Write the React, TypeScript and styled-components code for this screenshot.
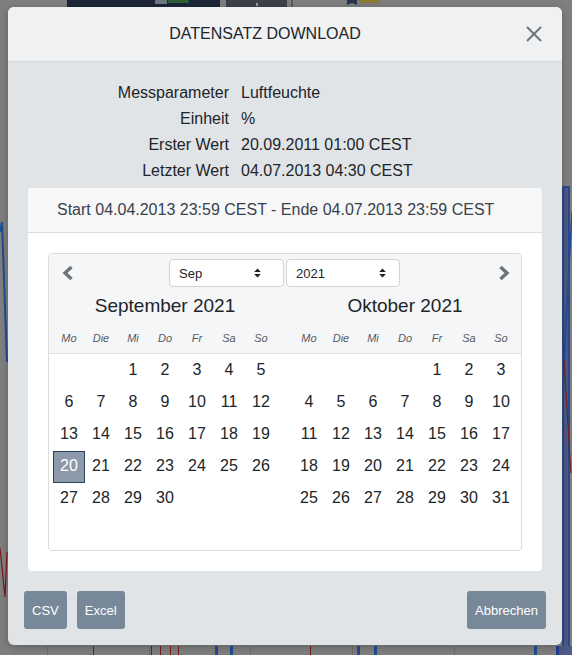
import React from "react";
import styled, { createGlobalStyle } from "styled-components";

const GlobalStyle = createGlobalStyle`
  html, body { margin: 0; padding: 0; }
  body {
    font-family: "Liberation Sans", Arial, sans-serif;
    background: #7f7f7f;
    color: #212529;
  }
  * { box-sizing: border-box; }
`;

const Backdrop = styled.div`
  position: relative;
  width: 572px;
  height: 655px;
  overflow: hidden;
  background: #7f7f7f;
  padding: 7px 0 0 8px;
`;

const BackdropArt = styled.svg`
  position: absolute;
  left: 0;
  top: 0;
  width: 572px;
  height: 655px;
`;

const Modal = styled.div`
  position: relative;
  width: 554px;
  background: #e0e4e7;
  border-radius: 6px;
  overflow: hidden;
  box-shadow: 0 2px 8px rgba(0, 0, 0, 0.25);
`;

const Header = styled.div`
  height: 55px;
  display: flex;
  align-items: center;
  padding: 0 16px;
  background: #eff1f3;
  border-bottom: 1px solid #d3d8dc;
`;

const Title = styled.h5`
  flex: 1;
  margin: 0;
  text-align: center;
  font-size: 16px;
  font-weight: 400;
  color: #212529;
`;

const CloseButton = styled.button`
  width: 40px;
  height: 30px;
  border: 0;
  background: none;
  padding: 0 4px 0 0;
  display: flex;
  align-items: center;
  justify-content: flex-end;
  cursor: pointer;
`;

const Body = styled.div`
  padding: 18px 20px 0;
`;

const InfoGrid = styled.div`
  display: grid;
  grid-template-columns: 201px 1fr;
  column-gap: 12px;
  font-size: 16px;
  line-height: 26px;
`;

const InfoLabel = styled.div`
  text-align: right;
`;

const InfoValue = styled.div``;

const Card = styled.div`
  margin-top: 4px;
  background: #ffffff;
  border-radius: 4px;
  overflow: hidden;
`;

const CardHeader = styled.div`
  height: 45px;
  display: flex;
  align-items: center;
  padding: 0 29px;
  background: #f7f7f7;
  border-bottom: 1px solid #dedede;
  color: #37424e;
  font-size: 16px;
`;

const CardBody = styled.div`
  padding: 20px;
`;

const Calendar = styled.div`
  height: 298px;
  border: 1px solid #dcdcdc;
  border-radius: 4px;
  overflow: hidden;
  background: #fff;
`;

const CalHeader = styled.div`
  background: #f5f6f8;
  padding-top: 5px;
  border-bottom: 1px solid #e2e2e2;
`;

const NavRow = styled.div`
  display: grid;
  grid-template-columns: 1fr auto 1fr;
  align-items: center;
  height: 28px;
`;

const NavButton = styled.button<{ $side: "left" | "right" }>`
  width: 20px;
  height: 20px;
  border: 0;
  background: none;
  padding: 0;
  display: flex;
  align-items: center;
  justify-content: center;
  cursor: pointer;
  justify-self: ${(p) => (p.$side === "left" ? "start" : "end")};
  margin-left: ${(p) => (p.$side === "left" ? "9px" : "0")};
  margin-right: ${(p) => (p.$side === "right" ? "7px" : "0")};
`;

const Selects = styled.div`
  display: flex;
  gap: 2px;
  margin-left: -1px;
`;

const FakeSelect = styled.div<{ $width: number; $arrowRight: number }>`
  width: ${(p) => p.$width}px;
  height: 28px;
  display: flex;
  align-items: center;
  justify-content: space-between;
  padding: 0 ${(p) => p.$arrowRight}px 0 9px;
  background: #fff;
  border: 1px solid #cfd4d9;
  border-radius: 4px;
  font-size: 13px;
  color: #212529;
`;

const Months = styled.div`
  display: grid;
  grid-template-columns: 224px 224px;
  column-gap: 16px;
  padding-left: 4px;
`;

const MonthHead = styled.div`
  padding-bottom: 3px;
`;

const MonthTitle = styled.div`
  margin-top: 7px;
  text-align: center;
  font-size: 19px;
  line-height: 24px;
  color: #212529;
`;

const WeekRow = styled.div`
  margin-top: 8px;
  display: grid;
  grid-template-columns: repeat(7, 32px);
  height: 24px;
  line-height: 24px;
`;

const WeekDay = styled.div`
  text-align: center;
  font-style: italic;
  font-size: 11px;
  color: #555b61;
`;

const DaysArea = styled(Months)`
  padding-top: 1px;
`;

const DayGrid = styled.div`
  display: grid;
  grid-template-columns: repeat(7, 32px);
  grid-auto-rows: 32px;
`;

const Day = styled.div<{ $selected?: boolean }>`
  width: 32px;
  height: 32px;
  line-height: 28px;
  text-align: center;
  font-size: 16px;
  color: ${(p) => (p.$selected ? "#ffffff" : "#212529")};
  background: ${(p) => (p.$selected ? "#8c99aa" : "transparent")};
  border: 1px solid ${(p) => (p.$selected ? "#2c4460" : "transparent")};
`;

const Footer = styled.div`
  display: flex;
  gap: 10px;
  padding: 20px 16px 16px;
`;

const Button = styled.button<{ $push?: boolean }>`
  height: 38px;
  padding: 0 8px;
  border: 0;
  border-radius: 3px;
  background: #778899;
  color: #fff;
  font-family: "Liberation Sans", Arial, sans-serif;
  font-size: 13px;
  margin-left: ${(p) => (p.$push ? "auto" : "0")};
  cursor: pointer;
`;

const Chevron = ({ dir }: { dir: "left" | "right" }) => (
  <svg width="14" height="16" viewBox="0 0 14 16">
    <polyline
      points={dir === "left" ? "10.5,2 4,8 10.5,14" : "3.5,2 10,8 3.5,14"}
      fill="none"
      stroke="#6c757d"
      strokeWidth="3.4"
      strokeLinejoin="miter"
    />
  </svg>
);

const SortIcon = () => (
  <svg width="7" height="10" viewBox="0 0 7 10">
    <polygon points="3.5,0.5 6.8,4 0.2,4" fill="#222" />
    <polygon points="0.2,6 6.8,6 3.5,9.5" fill="#222" />
  </svg>
);

const CloseIcon = () => (
  <svg width="16" height="16" viewBox="0 0 16 16">
    <line x1="1" y1="1" x2="15" y2="15" stroke="#6c757d" strokeWidth="2" />
    <line x1="15" y1="1" x2="1" y2="15" stroke="#6c757d" strokeWidth="2" />
  </svg>
);

const WEEKDAYS = ["Mo", "Die", "Mi", "Do", "Fr", "Sa", "So"];

function buildMonth(year: number, month: number) {
  const first = new Date(year, month, 1).getDay();
  const offset = (first + 6) % 7;
  const days = new Date(year, month + 1, 0).getDate();
  const cells: (number | null)[] = [];
  for (let i = 0; i < offset; i++) cells.push(null);
  for (let d = 1; d <= days; d++) cells.push(d);
  return cells;
}

const MONTHS = [
  { title: "September 2021", cells: buildMonth(2021, 8), selected: 20 },
  { title: "Oktober 2021", cells: buildMonth(2021, 9), selected: -1 },
];

const INFO = [
  ["Messparameter", "Luftfeuchte"],
  ["Einheit", "%"],
  ["Erster Wert", "20.09.2011 01:00 CEST"],
  ["Letzter Wert", "04.07.2013 04:30 CEST"],
];

const BackgroundArt = () => (
  <BackdropArt viewBox="0 0 572 655">
    <rect x="67" y="0" width="153" height="7" fill="#1c2638" />
    <rect x="155" y="0" width="12" height="4" fill="#6e7683" />
    <rect x="168" y="0" width="21" height="3" rx="1" fill="#2f5e36" />
    <rect x="226" y="0" width="61" height="7" fill="#3d4148" />
    <rect x="256" y="3" width="2" height="3" fill="#9aa0a8" />
    <rect x="291" y="0" width="2" height="7" fill="#5a5a5a" />
    <polygon points="347,0 357,0 357,5 352,3 347,5" fill="#2a3550" />
    <rect x="359" y="0" width="20" height="3" rx="1" fill="#8a7b32" />
    <polyline points="0,232 2,222 7,362" fill="none" stroke="#1f4e96" strokeWidth="2" />
    <polyline points="0,548 5,597 7,552" fill="none" stroke="#7a1a1a" strokeWidth="1.2" />
    <rect x="563" y="187" width="6" height="468" fill="#4b5a86" stroke="#1d3f8f" strokeWidth="1.5" />
    <polyline points="572,212 564,360" fill="none" stroke="#1f4e96" strokeWidth="1.5" />
    <polyline points="564,360 571,473" fill="none" stroke="#7a1a1a" strokeWidth="1" />
    {[47, 149, 250, 352, 454].map((x) => (
      <rect key={x} x={x} y="646" width="1" height="9" fill="#6e6e6e" />
    ))}
    {[215, 230, 357, 374, 534].map((x) => (
      <rect key={x} x={x} y="646" width="3" height="9" fill="#1f4e96" />
    ))}
    {[93, 151, 160, 170, 178, 310].map((x) => (
      <rect key={x} x={x} y="646" width="1" height="9" fill="#7a1a1a" />
    ))}
    <rect x="556" y="646" width="3" height="9" fill="#1d3f8f" />
    <rect x="559" y="646" width="13" height="9" fill="#4b5a86" />
  </BackdropArt>
);

export default function App() {
  return (
    <>
      <GlobalStyle />
      <Backdrop>
        <BackgroundArt />
        <Modal>
          <Header>
            <Title>DATENSATZ DOWNLOAD</Title>
            <CloseButton aria-label="Schließen">
              <CloseIcon />
            </CloseButton>
          </Header>
          <Body>
            <InfoGrid>
              {INFO.map(([label, value]) => (
                <React.Fragment key={label}>
                  <InfoLabel>{label}</InfoLabel>
                  <InfoValue>{value}</InfoValue>
                </React.Fragment>
              ))}
            </InfoGrid>
            <Card>
              <CardHeader>Start 04.04.2013 23:59 CEST - Ende 04.07.2013 23:59 CEST</CardHeader>
              <CardBody>
                <Calendar>
                  <CalHeader>
                    <NavRow>
                      <NavButton $side="left" aria-label="Vorheriger Monat">
                        <Chevron dir="left" />
                      </NavButton>
                      <Selects>
                        <FakeSelect $width={115} $arrowRight={22}>
                          <span>Sep</span>
                          <SortIcon />
                        </FakeSelect>
                        <FakeSelect $width={114} $arrowRight={13}>
                          <span>2021</span>
                          <SortIcon />
                        </FakeSelect>
                      </Selects>
                      <NavButton $side="right" aria-label="Nächster Monat">
                        <Chevron dir="right" />
                      </NavButton>
                    </NavRow>
                    <Months>
                      {MONTHS.map((m) => (
                        <MonthHead key={m.title}>
                          <MonthTitle>{m.title}</MonthTitle>
                          <WeekRow>
                            {WEEKDAYS.map((w) => (
                              <WeekDay key={w}>{w}</WeekDay>
                            ))}
                          </WeekRow>
                        </MonthHead>
                      ))}
                    </Months>
                  </CalHeader>
                  <DaysArea>
                    {MONTHS.map((m) => (
                      <DayGrid key={m.title}>
                        {m.cells.map((d, i) => (
                          <Day key={i} $selected={d === m.selected}>
                            {d ?? ""}
                          </Day>
                        ))}
                      </DayGrid>
                    ))}
                  </DaysArea>
                </Calendar>
              </CardBody>
            </Card>
          </Body>
          <Footer>
            <Button>CSV</Button>
            <Button>Excel</Button>
            <Button $push>Abbrechen</Button>
          </Footer>
        </Modal>
      </Backdrop>
    </>
  );
}
